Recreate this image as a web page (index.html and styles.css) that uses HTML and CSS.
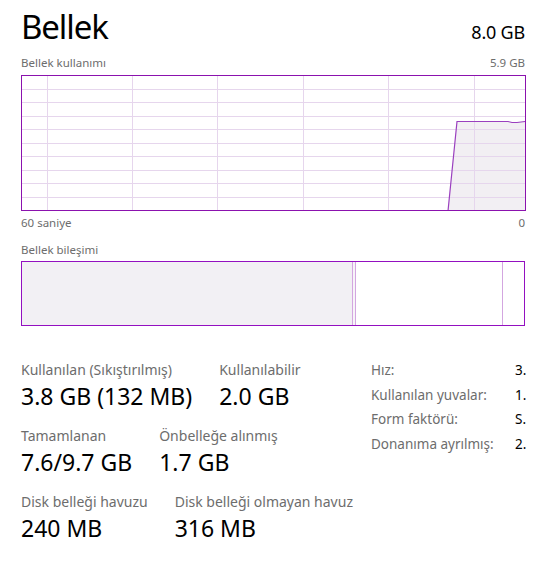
FILE: index.html
```html
<!DOCTYPE html>
<html lang="tr">
<head>
<meta charset="utf-8">
<link rel="stylesheet" href="styles.css">
</head>
<body>
<div class="panel">
  <div class="head">
    <h1 class="title">Bellek</h1>
    <span class="total">8.0 GB</span>
  </div>
  <div class="caption cap-top"><span>Bellek kullanımı</span><span>5.9 GB</span></div>
  <svg class="graph" width="505" height="136" viewBox="0 0 505 136">
    <polygon class="area" points="427,135 436,46.5 487,46.5 491,47.5 496,47.5 504,46.5 504,135"/>
    <g class="grid">
      <line x1="0" y1="14.5" x2="505" y2="14.5"/>
      <line x1="0" y1="27.5" x2="505" y2="27.5"/>
      <line x1="0" y1="41.5" x2="505" y2="41.5"/>
      <line x1="0" y1="54.5" x2="505" y2="54.5"/>
      <line x1="0" y1="68.5" x2="505" y2="68.5"/>
      <line x1="0" y1="81.5" x2="505" y2="81.5"/>
      <line x1="0" y1="95.5" x2="505" y2="95.5"/>
      <line x1="0" y1="108.5" x2="505" y2="108.5"/>
      <line x1="0" y1="122.5" x2="505" y2="122.5"/>
      <line x1="26.5" y1="0" x2="26.5" y2="136"/>
      <line x1="111.5" y1="0" x2="111.5" y2="136"/>
      <line x1="196.5" y1="0" x2="196.5" y2="136"/>
      <line x1="282.5" y1="0" x2="282.5" y2="136"/>
      <line x1="367.5" y1="0" x2="367.5" y2="136"/>
      <line x1="453.5" y1="0" x2="453.5" y2="136"/>
    </g>
    <polyline class="trace" points="427,136 436,46.5 487,46.5 491,47.5 496,47.5 504,46.5"/>
    <rect class="frame" x="0.5" y="0.5" width="504" height="135"/>
  </svg>
  <div class="caption cap-axis"><span>60 saniye</span><span>0</span></div>
  <div class="caption cap-comp"><span>Bellek bileşimi</span></div>
  <div class="bar">
    <div class="seg seg-used" style="width:331px"></div>
    <div class="seg seg-mod" style="width:3px"></div>
    <div class="seg seg-standby" style="width:147px"></div>
    <div class="seg seg-free"></div>
  </div>
  <div class="stats">
    <div class="main">
      <div class="row">
        <div class="stat"><div class="label">Kullanılan (Sıkıştırılmış)</div><div class="value">3.8 GB (132 MB)</div></div>
        <div class="stat"><div class="label">Kullanılabilir</div><div class="value">2.0 GB</div></div>
      </div>
      <div class="row">
        <div class="stat"><div class="label">Tamamlanan</div><div class="value">7.6/9.7 GB</div></div>
        <div class="stat"><div class="label">Önbelleğe alınmış</div><div class="value">1.7 GB</div></div>
      </div>
      <div class="row">
        <div class="stat"><div class="label">Disk belleği havuzu</div><div class="value">240 MB</div></div>
        <div class="stat"><div class="label">Disk belleği olmayan havuz</div><div class="value">316 MB</div></div>
      </div>
    </div>
    <div class="side">
      <span class="k">Hız:</span><span class="v">3.</span>
      <span class="k">Kullanılan yuvalar:</span><span class="v">1.</span>
      <span class="k">Form faktörü:</span><span class="v">S.</span>
      <span class="k">Donanıma ayrılmış:</span><span class="v">2.</span>
    </div>
  </div>
</div>
</body>
</html>
```

FILE: styles.css
```css
* { box-sizing: border-box; }
html, body { margin: 0; padding: 0; background: #ffffff; }
body {
  font-family: "Noto Sans", "Open Sans", "DejaVu Sans", sans-serif;
  color: #000;
  width: 545px;
  height: 562px;
  overflow: hidden;
}
.panel {
  padding: 0 20px 0 21px;
}
.head {
  display: flex;
  justify-content: space-between;
  align-items: baseline;
  height: 50px;
  padding-top: 5px;
}
.title {
  margin: 0;
  font-weight: 400;
  font-size: 33px;
  line-height: 44px;
  letter-spacing: -1.1px;
}
.total {
  font-size: 18px;
  letter-spacing: -0.2px;
}
.caption {
  display: flex;
  justify-content: space-between;
  font-size: 11.5px;
  color: #6d6d6d;
  line-height: 16px;
}
.cap-top { margin-top: 5px; height: 20px; }
.cap-axis { margin-top: 4px; }
.cap-comp { margin-top: 11px; height: 19px; }
.graph { display: block; }
.graph .area { fill: #f2eff3; }
.graph .grid line { stroke: #e6d6ed; stroke-width: 1; }
.graph .trace { fill: none; stroke: #9a3fbf; stroke-width: 1.2; }
.graph .frame { fill: none; stroke: #8b12ae; stroke-width: 1; }
.bar {
  display: flex;
  height: 65px;
  border: 1px solid #9310c0;
}
.seg { height: 100%; flex: none; border-right: 1px solid #d3a6e0; }
.seg-used { background: #f2f0f4; }
.seg-mod { background: #f7f4f8; }
.seg-standby { background: #fff; }
.seg-free { flex: 1; border-right: none; }
.stats {
  display: flex;
  justify-content: space-between;
  margin-top: 34px;
}
.main { display: flex; flex-direction: column; gap: 13.5px; }
.row { display: flex; gap: 27px; }
.label {
  font-size: 14px;
  line-height: 20px;
  color: #6d6d6d;
}
.value {
  font-size: 23px;
  line-height: 32.5px;
}
.side {
  display: grid;
  grid-template-columns: 144px auto;
  row-gap: 5.5px;
  width: 154px;
  margin-top: 1px;
  font-size: 13.5px;
  line-height: 19px;
  align-content: start;
}
.side .k { color: #6d6d6d; }
.side .v { color: #000; }
```
